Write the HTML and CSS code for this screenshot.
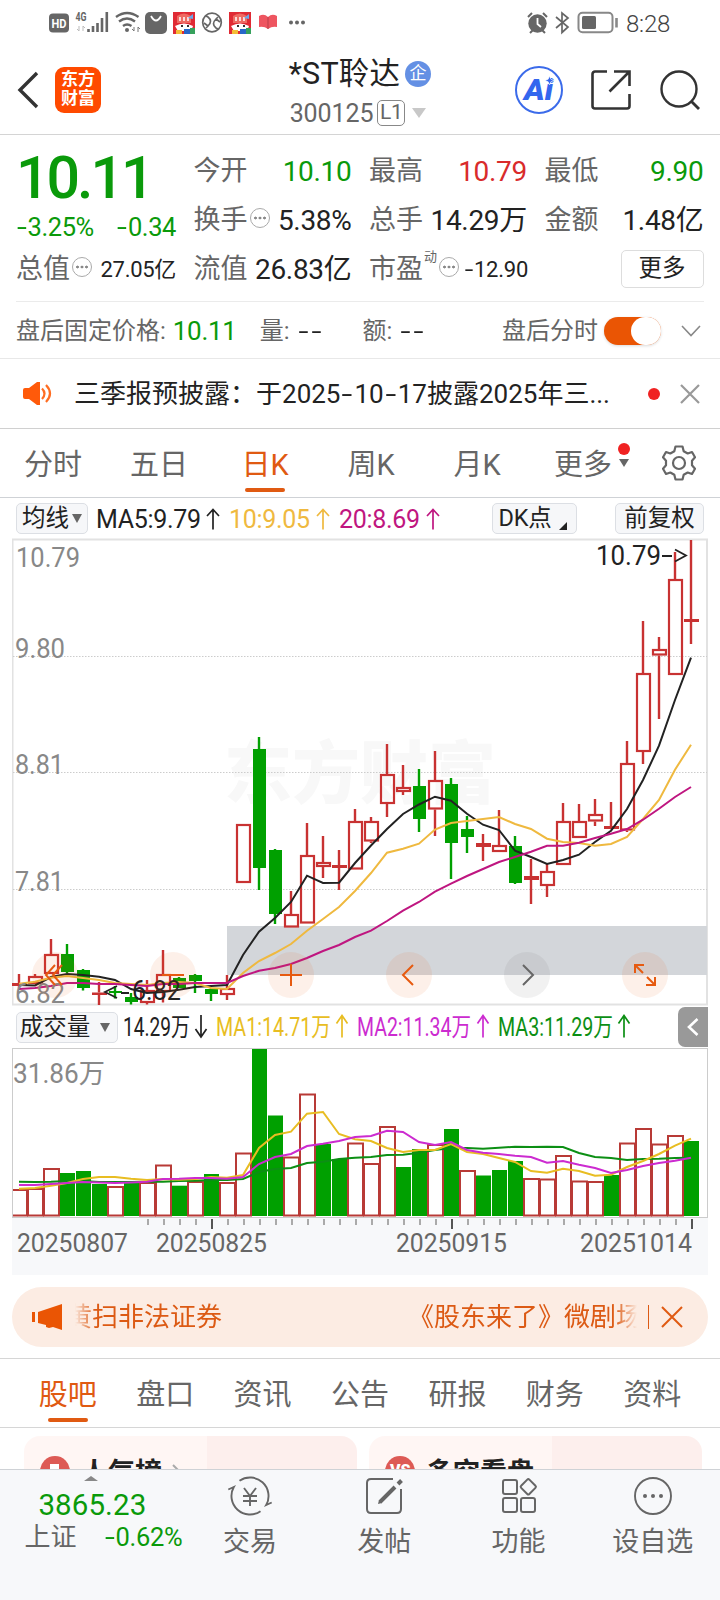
FILE: index.html
```
<!DOCTYPE html>
<html lang="zh-CN">
<head>
    <meta charset="UTF-8">
    <meta name="viewport" content="width=device-width,initial-scale=1.0">
    <title>*ST聆达 300125</title>
    <link rel="stylesheet" href="styles.css">
</head>
<body>
    <div class="status-bar">
        <svg class="status-left" width="320" height="46" viewBox="0 0 320 46">
            <rect x="49" y="13.500" width="20" height="19" rx="4" fill="#666"/>
            <text x="51.500" y="28" class="hd" textLength="15" lengthAdjust="spacingAndGlyphs">HD</text>
            <text x="75.500" y="21" class="net" textLength="11" lengthAdjust="spacingAndGlyphs">4G</text>
            <path d="M79 26v5l-2-2M83 31v-5l2 2" stroke="#bbb" fill="none"/>
            <path d="M88.500 32v-3M93 32v-6M97.500 32v-9M102 32v-14M106.800 32v-20" stroke="#666" stroke-width="2.600"/>
            <g stroke="#666" fill="none" stroke-width="2.400">
                <path d="M116 17q11-8 22.500 0M119 21.500q8-6 16 0M123 26q4-3 8.500 0"/>
            </g>
            <circle cx="127" cy="30" r="2" fill="#666"/>
            <path d="M134 27v4l-2-2M138 32v-5l2 2" stroke="#777" fill="none"/>
            <rect x="145" y="12" width="22" height="22" rx="5" fill="#666"/>
            <path d="M151 16q5 9 10 0" stroke="#fff" stroke-width="1.800" fill="none"/>
            <g id="game">
                <rect x="173" y="12" width="22" height="22" fill="#e02a34"/>
                <path d="M177 16q7-5 14 0v7h-14z" fill="#ee6a62"/>
                <path d="M180 17v4M184 17v4M188 17v4" stroke="#fff" stroke-width="1.500"/>
                <path d="M175 26q9-5 18 0l-2 5h-13z" fill="#fff"/>
                <path d="M181 26h2M187 26h2" stroke="#333" stroke-width="2"/>
                <rect x="176" y="30" width="6" height="4" fill="#f4bd35"/>
                <rect x="184" y="29" width="6" height="5" fill="#2767c9"/>
                <rect x="190" y="28" width="5" height="6" fill="#36a15c"/>
                <path d="M188 18l5-4v5z" fill="#69a7e8"/>
            </g>
            <use href="#game" x="56"/>
            <g stroke="#666" stroke-width="1.700" fill="none">
                <circle cx="212" cy="22.500" r="9.300"/>
                <path d="M206 16l2 1q5 4 0 9l-2 2M204 23l4 3M218 29l-2-1q-5-4 0-9l2-2M220 22l-4-3"/>
            </g>
            <path d="M259 16q5-3 9 1 4-4 9-1v11q-5-1-9 2-4-3-9-2z" fill="#ee5560"/>
            <path d="M268 17v12" stroke="#b93f49"/>
            <g fill="#666"><circle cx="291" cy="22.500" r="2"/><circle cx="297" cy="22.500" r="2"/><circle cx="303" cy="22.500" r="2"/></g>
        </svg>
        <div class="status-right">
            <svg width="96" height="46" viewBox="526 0 96 46">
                <circle cx="537.500" cy="23.500" r="9.200" fill="#666"/>
                <path d="M528 17l4-4M547 17l-4-4M530 33l3-3M545 33l-3-3" stroke="#666" stroke-width="2"/>
                <path d="M537.500 18v6l3.500 3" stroke="#fff" stroke-width="1.800" fill="none"/>
                <path d="M556 17l12 10-6 5.500V13l6 5-12 10" stroke="#666" stroke-width="1.700" fill="none"/>
                <rect x="578.500" y="12.700" width="34" height="19.500" rx="4" stroke="#888" stroke-width="2" fill="none"/>
                <rect x="582" y="16" width="14" height="13" rx="1.500" fill="#666"/>
                <path d="M616.500 18v9.500" stroke="#888" stroke-width="2.600"/>
            </svg>
            <span class="clock">8:28</span>
        </div>
    </div>

    <header>
        <div class="head-left">
            <svg width="24" height="40" viewBox="0 0 24 40"><path d="M21 3L4 20l17 17" fill="none" stroke="#333" stroke-width="3.400"/></svg>
            <div class="brand">东方<br>财富</div>
        </div>
        <div class="head-title">
            <h1>*ST聆达<i>企</i></h1>
            <p>300125<b>L1</b><span class="tri-light"></span></p>
        </div>
        <div class="head-right">
            <svg width="48" height="48" viewBox="0 0 48 48">
                <circle cx="24" cy="24" r="23" fill="none" stroke="#3b6bea" stroke-width="2"/>
                <text x="9" y="33.500" class="ai" textLength="29" lengthAdjust="spacingAndGlyphs">Ai</text>
                <path d="M34.500 10l1.300 3.200 3.200 1.300-3.200 1.300-1.300 3.200-1.300-3.200-3.200-1.300 3.200-1.300z" fill="#3366ee" stroke="#fff" stroke-width=".6"/>
            </svg>
            <svg class="share" width="40" height="40" viewBox="0 0 40 40">
                <path d="M16 1.500H4A2.500 2.500 0 0 0 1.500 4v32A2.500 2.500 0 0 0 4 38.500h32a2.500 2.500 0 0 0 2.500-2.500V24M23 1.500h15.500V16M37.500 2.500l-19 19" fill="none" stroke="#333" stroke-width="2.600"/>
            </svg>
            <svg width="42" height="42" viewBox="0 0 42 42"><circle cx="20" cy="20" r="17.500" fill="none" stroke="#333" stroke-width="2.400"/><path d="M32 32l8 8" stroke="#333" stroke-width="2.800"/></svg>
        </div>
    </header>

    <section class="quote">
        <div class="q-main">
            <strong>10.11</strong>
            <p><span><u>-</u>3.25%</span><span><u>-</u>0.34</span></p>
        </div>
        <div class="q-cell"><label>今开</label><span class="green">10.10</span></div>
        <div class="q-cell"><label>最高</label><span class="red">10.79</span></div>
        <div class="q-cell"><label>最低</label><span class="green">9.90</span></div>
        <div class="q-cell"><label>换手<em class="info"></em></label><span>5.38%</span></div>
        <div class="q-cell"><label>总手</label><span>14.29万</span></div>
        <div class="q-cell"><label>金额</label><span>1.48亿</span></div>
        <div class="q-cell"><label>总值<em class="info"></em></label><span class="small">27.05亿</span></div>
        <div class="q-cell"><label>流值</label><span>26.83亿</span></div>
        <div class="q-cell pe"><label>市盈<sup>动</sup><em class="info"></em></label><span class="small"><u>-</u>12.90</span></div>
        <div class="q-cell end"><button class="more">更多</button></div>
    </section>

    <section class="after">
        <span>盘后固定价格:</span><span class="after-price">10.11</span>
        <span>量: <b><u>-</u><u>-</u></b></span>
        <span class="amount">额: <b><u>-</u><u>-</u></b></span>
        <span class="after-label">盘后分时</span>
        <span class="switch"></span>
        <svg width="20" height="12" viewBox="0 0 20 12"><path d="M1 1l9 9.500L19 1" fill="none" stroke="#888" stroke-width="1.600"/></svg>
    </section>

    <section class="notice">
        <svg width="30" height="26" viewBox="0 0 30 26">
            <path d="M1 9q0-2 2-2h4l8-6h3v23h-3l-8-6H3q-2 0-2-2z" fill="#ff5a0a"/>
            <path d="M20 7.500q5 5 0 10.500M24 4q8 8.500 0 17" fill="none" stroke="#ff6d22" stroke-width="2.200"/>
        </svg>
        <p>三季报预披露：<span>于2025<u>-</u>10<u>-</u>17披露2025年三...</span></p>
        <i></i>
        <svg width="20" height="20" viewBox="0 0 20 20"><path d="M1 1l18 18M19 1L1 19" stroke="#999" stroke-width="2.200"/></svg>
    </section>

    <nav class="k-tabs">
        <a>分时</a><a>五日</a><a class="on">日K</a><a>周K</a><a>月K</a>
        <a class="k-more">更多<span class="arrow-box"><i></i></span></a>
        <svg width="34" height="36" viewBox="0 0 34 36">
            <path d="M13.500 1.500h7l1.200 4.700 4 2.300 4.300-1.500 3 5.200-3 3.500v4.600l3 3.500-3 5.200-4.300-1.500-4 2.300-1.200 4.700h-7l-1.200-4.700-4-2.300L4 29l-3-5.200 3-3.500v-4.600l-3-3.500L4 7l4.300 1.500 4-2.300z" fill="none" stroke="#666" stroke-width="2.200" stroke-linejoin="round"/>
            <circle cx="17" cy="18" r="6" fill="none" stroke="#666" stroke-width="2.200"/>
        </svg>
    </nav>

    <div class="ma-row">
        <button class="chip ma-chip">均线<i class="tri"></i></button>
        <span class="ma ma5">MA5:9.79</span><svg class="up c-black"><use href="#arrow-up"/></svg>
        <span class="ma c-yellow">10:9.05</span><svg class="up c-yellow"><use href="#arrow-up"/></svg>
        <span class="ma c-pink">20:8.69</span><svg class="up c-pink"><use href="#arrow-up"/></svg>
        <button class="chip dk">DK点<i class="corner"></i></button>
        <button class="chip fq">前复权</button>
    </div>

    <svg class="defs" width="0" height="0">
        <symbol id="arrow-up" viewBox="0 0 14 22"><path d="M7 21.500V1.500M1 8l6-6.500L13 8" fill="none" stroke="currentColor" stroke-width="1.700"/></symbol>
    </svg>

    <svg id="kline" class="chart" width="696" height="468" viewBox="12 538 696 468"></svg>

    <div class="vol-row">
        <button class="chip vol-chip">成交量<i class="tri"></i></button>
        <svg width="520" height="42" viewBox="120 1006 520 42" class="vol-legend">
            <g fill="#222" color="#222"><text x="123" y="1036" textLength="67">14.29万</text><path d="M201 1015v22M195.500 1029l5.500 8 5.500-8"/></g>
            <g fill="#e8bd22" color="#e8bd22"><text x="216" y="1036" textLength="115">MA1:14.71万</text><path d="M342 1037.500v-22M336.500 1023.500l5.500-8 5.500 8"/></g>
            <g fill="#cc2bd0" color="#cc2bd0"><text x="357" y="1036" textLength="114">MA2:11.34万</text><path d="M483 1037.500v-22M477.500 1023.500l5.500-8 5.500 8"/></g>
            <g fill="#0c8f14" color="#0c8f14"><text x="498" y="1036" textLength="115">MA3:11.29万</text><path d="M624 1037.500v-22M618.500 1023.500l5.500-8 5.500 8"/></g>
        </svg>
        <div class="drawer"><svg width="12" height="18" viewBox="0 0 12 18"><path d="M10.500 1L2 9l8.500 8" fill="none" stroke="#fff" stroke-width="2.600"/></svg></div>
    </div>

    <svg id="volume" class="chart" width="696" height="170" viewBox="12 1048 696 170"></svg>
    <svg id="axis" class="chart axis" width="696" height="57" viewBox="12 1218 696 57"></svg>

    <div class="banner">
        <svg width="32" height="28" viewBox="0 0 32 28"><path d="M1 9h3v10H1zM7 9l24-8v26l-9-3-4 1-3-1v-2l-8-2z" fill="#ea5504"/></svg>
        <div class="marquee"><span>黄扫非法证券</span><span>《股东来了》微剧场</span></div>
        <i></i>
        <svg width="22" height="22" viewBox="0 0 22 22"><path d="M1 1l20 20M21 1L1 21" stroke="#e05a12" stroke-width="2"/></svg>
    </div>

    <nav class="sub-tabs">
        <a class="on">股吧</a><a>盘口</a><a>资讯</a><a>公告</a><a>研报</a><a>财务</a><a>资料</a>
    </nav>

    <section class="cards">
        <div class="card">
            <svg width="30" height="30" viewBox="0 0 30 30"><circle cx="15" cy="15" r="15" fill="#dd5a55"/><path d="M10 8h9v14h-9z" fill="#fff"/></svg>
            <h2>人气榜</h2>
            <svg class="go" width="10" height="18" viewBox="0 0 10 18"><path d="M1 1l8 8-8 8" fill="none" stroke="#aaa" stroke-width="2"/></svg>
        </div>
        <div class="card">
            <svg width="30" height="30" viewBox="0 0 30 30"><circle cx="15" cy="15" r="15" fill="#dd5a55"/><text x="5" y="20" class="vs">VS</text></svg>
            <h2>多空看盘</h2>
        </div>
    </section>

    <footer>
        <div class="index">
            <i></i>
            <strong>3865.23</strong>
            <p><span>上证</span><b><u>-</u>0.62%</b></p>
        </div>
        <a>
            <svg width="46" height="40" viewBox="0 0 46 40" fill="none" stroke="#666" stroke-width="1.900">
                <path d="M12.500 4.800A18.500 18.500 0 0 1 39.200 29l5.500-2.500M33.500 35.200A18.500 18.500 0 0 1 6.800 11L1.300 13.500"/>
                <path d="M17 12l6 8 6-8M23 20v10M16 20h14M16 25h14"/>
            </svg>
            交易
        </a>
        <a>
            <svg width="40" height="40" viewBox="0 0 40 40" fill="none" stroke="#666" stroke-width="2">
                <path d="M29 3H7Q3 3 3 7v26q0 4 4 4h26q4 0 4-4V13"/>
                <path d="M16 26l15-15M34 8l3.500-3.500" stroke-width="4"/>
                <path d="M14 28l4-1-3-3z" fill="#666" stroke="none"/>
            </svg>
            发帖
        </a>
        <a>
            <svg width="40" height="40" viewBox="0 0 40 40" fill="none" stroke="#666" stroke-width="2">
                <rect x="4" y="4" width="14" height="14" rx="2"/>
                <rect x="4" y="22" width="14" height="14" rx="2"/>
                <rect x="22" y="22" width="14" height="14" rx="2"/>
                <rect x="23.500" y="5" width="11.600" height="11.600" rx="1.500" transform="rotate(45 29.300 10.800)"/>
            </svg>
            功能
        </a>
        <a>
            <svg width="40" height="40" viewBox="0 0 40 40"><circle cx="20" cy="20" r="18" fill="none" stroke="#666" stroke-width="1.900"/><g fill="#666"><circle cx="12" cy="20" r="2"/><circle cx="20" cy="20" r="2"/><circle cx="28" cy="20" r="2"/></g></svg>
            设自选
        </a>
    </footer>
    <script src="chart.js"></script>
</body>
</html>
```

FILE: styles.css
```
*{
    margin: 0;
    padding: 0;
    box-sizing: border-box;
}
body{
    width: 720px;
    height: 1600px;
    overflow: hidden;
    background: #fff;
    color: #222;
    font-family: Roboto, "Noto Sans CJK SC", sans-serif;
    font-size: 26px;
    line-height: 1;
}
svg{
    display: block;
    flex: none;
}
i, em{
    font-style: normal;
}
/* wide minus sign */
u{
    display: inline-block;
    width: .45em;
    text-align: center;
    text-decoration: none;
    transform: scaleX(1.4);
}
button{
    font-family: inherit;
    color: #222;
}
.green{
    color: #0a9a0a;
}
.red{
    color: #d92b2b;
}
.c-black{
    color: #222;
}
.c-yellow{
    color: #efb93f;
}
.c-pink{
    color: #bf1680;
}
.defs{
    position: absolute;
}

/* status bar */
.status-bar{
    height: 46px;
    display: flex;
    justify-content: space-between;
}
.status-right{
    display: flex;
    align-items: center;
    width: 194px;
}
.clock{
    font-size: 24px;
    font-weight: 300;
    color: #444;
    margin: 1px 0 0 4px;
    letter-spacing: -.2px;
}
.hd{
    font-size: 13px;
    font-weight: bold;
    fill: #fff;
}
.net{
    font-size: 12px;
    font-weight: bold;
    fill: #666;
}

/* header */
header{
    height: 89px;
    display: flex;
    justify-content: space-between;
    border-bottom: 1px solid #d4d4d4;
}
.head-left, .head-right{
    width: 250px;
    display: flex;
    align-items: center;
}
.head-left{
    padding-left: 16px;
}
.brand{
    width: 46px;
    height: 46px;
    margin-left: 15px;
    padding-top: 3px;
    background: #ff4a00;
    border-radius: 9px;
    color: #fff;
    font-size: 17px;
    font-weight: bold;
    line-height: 19px;
    text-align: center;
}
.head-title{
    display: flex;
    flex-direction: column;
    align-items: center;
    padding-top: 10px;
}
.head-title h1{
    display: flex;
    align-items: center;
    height: 36px;
    font-size: 30.500px;
    font-weight: normal;
    white-space: nowrap;
    letter-spacing: .2px;
}
.head-title h1 i{
    width: 26px;
    height: 26px;
    margin-left: 5px;
    border-radius: 50%;
    background: #6490e4;
    color: #fff;
    font-size: 17px;
    line-height: 25px;
    text-align: center;
}
.head-title p{
    display: flex;
    align-items: center;
    height: 42px;
    margin-left: -4px;
    font-size: 25px;
    color: #666;
    letter-spacing: -.1px;
}
.head-title b{
    width: 28px;
    height: 26px;
    margin-left: 4px;
    border: 1.500px solid #888;
    border-radius: 5px;
    font-size: 21px;
    font-weight: normal;
    line-height: 23px;
    text-align: center;
}
.tri-light{
    margin-left: 7px;
    border: 7.500px solid transparent;
    border-top: 10px solid #c8c8c8;
    border-bottom: 0;
}
.head-right{
    padding-left: 45px;
}
.ai{
    font-size: 29px;
    font-weight: 900;
    font-style: italic;
    fill: #3366ee;
}
.share{
    margin: 0 28px 0 28px;
}

/* quote */
.quote{
    height: 167px;
    margin: 0 16px;
    padding-top: 12px;
    display: grid;
    grid-template-columns: 160px 158px 158px 159px;
    grid-template-rows: 49px 49px 49px;
    column-gap: 17.500px;
    border-bottom: 1px solid #ebebeb;
}
.q-main{
    grid-row: span 2;
    color: #0a9a0a;
}
.q-main strong{
    display: block;
    height: 61px;
    font-size: 59px;
    font-weight: 500;
    line-height: 61px;
    letter-spacing: -3px;
}
.q-main p{
    display: flex;
    justify-content: space-between;
    line-height: 39px;
    font-size: 25.500px;
    letter-spacing: -.400px;
}
.q-cell{
    display: flex;
    justify-content: space-between;
    align-items: center;
    font-size: 28px;
    white-space: nowrap;
    letter-spacing: -.3px;
}
.q-cell label{
    display: flex;
    align-items: center;
    font-size: 27px;
    color: #666;
    letter-spacing: 0;
}
.q-cell.end{
    justify-content: flex-end;
}
.q-cell.end .more{
    margin-top: -2px;
}
.q-cell .small{
    font-size: 22px;
}
.q-cell.pe{
    justify-content: flex-start;
}
.q-cell.pe .small{
    margin-left: 5px;
    letter-spacing: -.2px;
}
.q-cell sup{
    margin: -26px 0 0 1px;
    font-size: 13px;
}
.info{
    width: 20px;
    height: 20px;
    margin: -6px 0 0 2px;
    border: 1.500px solid #aaa;
    border-radius: 50%;
    background: radial-gradient(circle, #888 1.200px, transparent 1.700px) center / 4.500px 30px repeat-x content-box;
    padding: 0 2px;
}
.more{
    width: 83px;
    height: 38px;
    border: 1.500px solid #ddd;
    border-radius: 5px;
    background: #fff;
    font-size: 23.500px;
    line-height: 30px;
    padding-bottom: 2px;
}

/* after hours */
.after{
    height: 57px;
    padding: 2px 19px 0 16px;
    display: flex;
    align-items: center;
    border-bottom: 1px solid #e8e8e8;
    font-size: 24px;
    color: #666;
}
.after b{
    color: #222;
    font-weight: normal;
    margin-left: 1px;
}
.after b u{
    width: 13px;
    transform: scaleX(1.5);
}
.after-price{
    width: 94px;
    padding-left: 7px;
    font-size: 26px;
    color: #0a9a0a;
    letter-spacing: -.3px;
}
.amount{
    margin-left: 40px;
}
.after-label{
    margin-left: auto;
}
.switch{
    width: 57px;
    height: 28px;
    margin: 0 20px 0 6px;
    border-radius: 14px;
    background: #ea5504;
    box-shadow: 0 1px 3px rgba(0,0,0,.15);
}
.switch::after{
    content: "";
    display: block;
    width: 30px;
    height: 28px;
    margin-left: 27px;
    border-radius: 15px;
    background: #fff;
}

/* notice */
.notice{
    height: 70px;
    padding: 0 20px 0 22px;
    display: flex;
    align-items: center;
    border-bottom: 1px solid #d0d0d0;
}
.notice p{
    margin-left: 22px;
    white-space: nowrap;
}
.notice u{
    width: 14px;
    transform: scaleX(1.5);
}
.notice i{
    width: 12px;
    height: 12px;
    margin: 0 20px 0 auto;
    border-radius: 50%;
    background: #f02222;
}

/* period tabs */
.k-tabs{
    height: 69px;
    display: flex;
    align-items: center;
    border-bottom: 1px solid #cfd2d6;
}
.k-tabs a{
    width: 106px;
    height: 68px;
    padding-top: 4px;
    display: flex;
    justify-content: center;
    align-items: center;
    font-size: 29px;
    color: #666;
    position: relative;
}
.k-tabs svg{
    margin-left: 26px;
}
.k-tabs a.on, .sub-tabs a.on{
    color: #e05a12;
}
.k-tabs .on::after, .sub-tabs .on::after{
    content: "";
    position: absolute;
    bottom: 5px;
    width: 40px;
    height: 4px;
    border-radius: 2px;
    background: #e05a12;
}
.k-more .arrow-box{
    position: absolute;
    left: 89px;
    top: 30px;
    border: 5px solid transparent;
    border-top: 8px solid #666;
    border-bottom: 0;
}
.arrow-box i{
    position: absolute;
    left: -6px;
    top: -24px;
    width: 12px;
    height: 12px;
    border-radius: 50%;
    background: #f02222;
}

/* moving average row */
.ma-row{
    height: 40px;
    padding: 1px 16px 0;
    display: flex;
    align-items: center;
}
.chip{
    height: 31px;
    padding-bottom: 1px;
    display: flex;
    align-items: center;
    justify-content: center;
    border: 1px solid #dcdfe4;
    border-radius: 5px;
    background: #f6f7f9;
    font-size: 23.500px;
    line-height: 28px;
    white-space: nowrap;
}
.ma-chip{
    width: 72px;
    margin-right: 8px;
}
.tri{
    margin: 1px 0 0 3px;
    border: 5px solid transparent;
    border-top: 9px solid #666;
    border-bottom: 0;
}
.ma{
    width: 83px;
    padding-top: 1px;
    font-size: 25px;
    letter-spacing: -.3px;
}
.ma5{
    width: 106px;
}
.up{
    width: 14px;
    height: 22px;
    margin: 0 9px 0 4px;
}
.dk{
    width: 85px;
    margin-left: auto;
    padding-right: 10px;
    letter-spacing: -.2px;
}
.corner{
    margin: 16px -6px 0 7px;
    border-left: 8px solid transparent;
    border-bottom: 8px solid #222;
}
.fq{
    width: 89px;
    margin-left: 38px;
}

/* charts */
.chart{
    margin-left: 12px;
}
.chart .label{
    font-size: 27px;
    fill: #888;
}
.chart .mark{
    font-size: 27px;
    fill: #222;
}
.watermark{
    font-size: 68px;
    font-weight: 900;
    fill: #f8f8f8;
}
.axis{
    background: #f7f8fa;
}
.axis text{
    font-size: 25px;
    fill: #666;
}
.vol-row{
    height: 42px;
    padding: 0 12px 0 16px;
    display: flex;
    align-items: center;
}
.vol-chip{
    width: 102px;
    padding-right: 4px;
}
.vol-chip .tri{
    margin-left: 10px;
}
.vol-legend{
    margin-left: 2px;
}
.vol-legend text{
    font-size: 25px;
}
.vol-legend path{
    fill: none;
    stroke: currentColor;
    stroke-width: 1.700;
}
.drawer{
    width: 30px;
    height: 40px;
    margin-left: auto;
    display: flex;
    align-items: center;
    justify-content: center;
    border-radius: 7px 0 0 7px;
    background: #999;
}

/* banner */
.banner{
    height: 60px;
    margin: 12px 12px 11px;
    padding: 0 25px 0 19px;
    display: flex;
    align-items: center;
    border-radius: 30px;
    background: #fcece3;
    color: #dc5a14;
}
.marquee{
    width: 564px;
    height: 40px;
    margin-left: 12px;
    display: flex;
    justify-content: space-between;
    align-items: center;
    overflow: hidden;
    white-space: nowrap;
    -webkit-mask-image: linear-gradient(90deg, transparent, #000 20px, #000 540px, transparent);
    mask-image: linear-gradient(90deg, transparent, #000 20px, #000 540px, transparent);
}
.marquee span{
    margin: 0 -5px 0 -9px;
}
.banner i{
    width: 1px;
    height: 24px;
    margin: 0 12px 0 11px;
    background: #dc5a14;
}

/* sub tabs */
.sub-tabs{
    height: 70px;
    padding: 0 19px;
    display: flex;
    border-top: 1px solid #d6d6d6;
    border-bottom: 1px solid #d6d6d6;
}
.sub-tabs a{
    flex: 1;
    position: relative;
    display: flex;
    justify-content: center;
    align-items: center;
    padding-top: 4px;
    font-size: 29px;
    color: #666;
}
.sub-tabs .on::after{
    bottom: 5px;
}

.cards{
    height: 41px;
    padding: 8px 18px 0 24px;
    display: flex;
    gap: 12px;
    overflow: hidden;
}
.card{
    width: 333px;
    height: 120px;
    padding: 20px 16px;
    display: flex;
    border-radius: 16px;
    background: linear-gradient(90deg, #fff6f4 55%, #fdefed 55%);
}
.card h2{
    margin: 1px 0 0 11px;
    font-size: 27px;
    font-weight: bold;
    line-height: 32px;
    color: #222;
}
.card .go{
    margin: 8px 0 0 10px;
}
.vs{
    font-size: 16px;
    font-weight: 900;
    fill: #fff;
}

/* bottom bar */
footer{
    height: 131px;
    display: flex;
    border-top: 1px solid #cfd2d6;
    background: #f7f8fa;
    color: #666;
}
.index{
    width: 183px;
    display: flex;
    flex-direction: column;
    align-items: center;
}
.index i{
    margin-top: 6px;
    border: 7px solid transparent;
    border-bottom: 5px solid #888;
    border-top: 0;
}
.index strong{
    margin: 7px 0 0 2px;
    color: #0a9a0a;
    font-size: 29.500px;
    font-weight: normal;
    line-height: 34px;
    letter-spacing: .1px;
}
.index p{
    width: 158px;
    margin: 1px 0 0 24px;
    display: flex;
    justify-content: space-between;
    align-items: center;
    line-height: 28px;
}
.index b{
    color: #0a9a0a;
    font-weight: normal;
    font-size: 25.500px;
    letter-spacing: -.3px;
}
footer a{
    width: 134.500px;
    padding-top: 6px;
    display: flex;
    flex-direction: column;
    align-items: center;
    font-size: 27px;
    line-height: 52px;
}
```

FILE: chart.js
```
const RED = '#c83232';
const GREEN = '#00a000';
const X0 = 19;
const STEP = 16;

// [up, high, body top, body bottom, low]
const candles = [
    [1, 974, 983, 986, 988], [1, 974, 976, 984, 984], [1, 939, 954, 974, 974], [0, 944, 954, 972, 973],
    [0, 969, 970, 988, 990.5], [1, 982, 992.5, 995, 1005], [0, 986, 991, 993, 998.5], [0, 993, 997, 1002, 1004.5],
    [1, 980, 990, 1003, 1004.5], [1, 950, 974, 992, 1002.5], [0, 977, 978, 988, 988], [0, 974, 975, 981, 993],
    [0, 988, 989, 994, 1001], [1, 975, 988, 995, 1000], [1, 824, 824, 883, 883], [0, 737, 749, 868, 890],
    [0, 849, 850, 914, 924], [1, 891, 914, 927.5, 927], [1, 823, 855, 923.5, 923], [1, 836, 862, 867, 878],
    [1, 850, 865, 868, 890], [1, 809, 821, 869.5, 869], [1, 817, 821, 841.5, 843], [1, 744, 774, 804, 817],
    [1, 765, 787, 792, 795], [0, 769, 786, 819, 832], [1, 751, 780, 809.5, 836], [0, 778, 784, 843, 879],
    [0, 816, 829, 837, 853], [1, 834, 843, 847, 861], [1, 810, 845, 852, 852], [0, 836, 846, 883, 884],
    [1, 859, 876, 880, 904], [1, 863, 871, 886, 897], [1, 803, 821, 865, 865], [1, 804, 821, 838, 838],
    [1, 799, 814, 821.5, 826], [1, 802, 826, 829, 829], [1, 741, 763, 830.5, 832], [1, 621, 673, 752, 764],
    [1, 637, 649, 655.5, 719], [1, 552, 579, 675, 675], [1, 540, 619, 622, 644]
];
const ma5 = [985, 985.5, 977, 974, 975, 976.7, 980, 989, 993, 992, 989.7, 987, 986, 985, 955, 931.7, 918, 902, 875.7, 883, 882.7, 863, 845.5, 829, 814, 804.5, 796.7, 800.7, 813.7, 824.7, 830, 850.7, 857, 864, 860, 854.7, 842, 830.7, 809, 780, 745.7, 700, 657.7];
const ma10 = [983.7, 981.7, 977.7, 976, 978, 980, 983, 984, 985, 983, 982, 983, 988, 989, 973, 961, 953, 944, 930.7, 919, 907, 891, 873, 852.7, 848.7, 843.7, 829.5, 823, 821, 819, 817, 824, 829, 838.7, 842, 843, 845.7, 844, 837, 819, 800, 769.7, 744.7];
const ma20 = [989, 988, 986, 983, 983, 984, 984, 985, 986, 984, 984, 983, 983, 983, 976, 970.7, 968, 964, 958, 951, 945, 937, 930.7, 921, 910.7, 902, 891.7, 883.7, 876, 869, 862, 857, 851.7, 845.7, 845.7, 842.7, 838, 833.7, 829, 819.7, 808.7, 797, 787];

// [red, top]
const bars = [
    [1, 1189], [1, 1189], [1, 1169], [0, 1173], [0, 1171], [0, 1184], [1, 1187], [0, 1183], [1, 1183], [1, 1165.5],
    [0, 1185.7], [1, 1182], [0, 1174], [1, 1183], [1, 1153.5], [0, 1049], [0, 1115.5], [1, 1157.5], [1, 1094.5], [0, 1144],
    [0, 1159], [1, 1143.5], [1, 1164], [1, 1127], [0, 1167], [0, 1149], [1, 1145], [0, 1129], [1, 1171], [0, 1175.5],
    [0, 1170], [0, 1161], [1, 1179], [1, 1179.5], [1, 1156], [1, 1181.5], [1, 1182], [0, 1175], [1, 1143.5], [1, 1129],
    [1, 1144.5], [1, 1136], [0, 1141]
];
const vma1 = [1188.7, 1188, 1185.7, 1183, 1179, 1177, 1177, 1178.7, 1180, 1179, 1179.7, 1179, 1177, 1177.7, 1175, 1148, 1135, 1131.7, 1113.7, 1112, 1134, 1139.3, 1141, 1148, 1152, 1150, 1150, 1144, 1152, 1154, 1158, 1162, 1171, 1172.7, 1168.7, 1171, 1175.7, 1174.7, 1167, 1161, 1154, 1145.7, 1138.7];
const vma2 = [1185, 1185, 1184, 1183, 1182, 1182.5, 1183, 1182.5, 1181.7, 1179, 1178.7, 1178, 1178, 1178.7, 1177, 1164, 1157, 1154, 1146, 1143.7, 1141, 1137, 1136, 1130.7, 1132, 1142, 1145, 1142, 1150, 1152.7, 1154, 1155.7, 1157, 1162.7, 1161, 1164.7, 1168, 1173, 1170, 1166, 1163, 1160.7, 1157.7];
const vma3 = [1181.7, 1182, 1181.7, 1181, 1181, 1182, 1182, 1182, 1181.7, 1181.7, 1181, 1180.7, 1180, 1180, 1179, 1172, 1169, 1168, 1163, 1161.7, 1159, 1157.7, 1157, 1155, 1154.7, 1152.7, 1150, 1148, 1148, 1148.7, 1147.7, 1146.7, 1147, 1146.7, 1147, 1153, 1157, 1158, 1160, 1159, 1158.7, 1158, 1157.7];

const x = i => X0 + STEP * i;
const line = (arr, color) =>
    `<polyline points="${arr.map((v, i) => x(i) + ',' + v).join(' ')}" fill="none" stroke="${color}" stroke-width="2"/>`;
const text = (px, py, cls, str, len) =>
    `<text x="${px}" y="${py}" class="${cls}" textLength="${len}" lengthAdjust="spacingAndGlyphs">${str}</text>`;

// price chart
let k = '<rect x="12.5" y="539.5" width="694.5" height="465" fill="#fff" stroke="#e2e2e2" stroke-width="2"/>';
k += '<text x="224" y="798" class="watermark">东方财富</text>';
[656.5, 772.5, 889.5].forEach(y => {
    k += `<path d="M13 ${y}H707" stroke="#ccc" stroke-dasharray="1.5 1.5"/>`;
});
k += '<rect x="227" y="926" width="480" height="49" fill="#d3d6da"/>';
candles.forEach(([up, high, top, bottom, low], i) => {
    const c = up ? RED : GREEN;
    if (high < top) k += `<path d="M${x(i)} ${high}V${top}" stroke="${c}" stroke-width="2.4"/>`;
    if (low > bottom) k += `<path d="M${x(i)} ${bottom}V${low}" stroke="${c}" stroke-width="2.4"/>`;
    if (up && bottom - top > 4) {
        k += `<rect x="${x(i) - 6}" y="${top + 1}" width="13" height="${bottom - top - 2}" fill="none" stroke="${c}" stroke-width="2.2"/>`;
    } else {
        const w = up ? 15 : 13;
        k += `<rect x="${x(i) - (up ? 7 : 6)}" y="${top}" width="${w}" height="${bottom - top}" fill="${c}"/>`;
    }
});
k += line(ma5, '#222') + line(ma10, '#efb93f') + line(ma20, '#bf1680');
k += text(16, 567, 'label', '10.79', 64) + text(15, 658, 'label', '9.80', 50) + text(15, 774, 'label', '8.81', 49);
k += text(15, 891, 'label', '7.81', 49) + text(15, 1002.5, 'label', '6.82', 50);
k += text(596, 565, 'mark', '10.79', 65) + '<path d="M662 556h10M675 549.5l11 6-11 6" fill="none" stroke="#222" stroke-width="1.8"/>';
k += text(132, 1000, 'mark', '6.82', 49) + '<path d="M121 993h8M117 986l-12 6 12 6" fill="none" stroke="#222" stroke-width="1.8"/>';
// round control buttons
const controls = [
    [55, 'M0-10l-9 10 9 10M7-10l-9 10 9 10'],
    [173, 'M-11 0H11'],
    [291, 'M-11 0H11M0-11V11'],
    [409, 'M4-10l-10 10 10 10'],
    [527, 'M-4-10l10 10-10 10'],
    [645, 'M-10-2V-10H-1M-10-10L-2-2M10 2V10H1M10 10L2 2']
];
controls.forEach(([cx, d], i) => {
    const c = i === 4 ? '#666' : '#e65a10';
    k += `<g transform="translate(${cx} 975)"><circle r="23" fill="${c}" fill-opacity=".09"/><path d="${d}" fill="none" stroke="${c}" stroke-width="2"/></g>`;
});
document.getElementById('kline').innerHTML = k;

// volume chart
let v = '<rect x="12.5" y="1048.5" width="695" height="169" fill="#fff" stroke="#ccc"/>';
v += text(13, 1083, 'label', '31.86万', 92);
bars.forEach(([red, top], i) => {
    const left = Math.max(13, x(i) - 7);
    const w = x(i) + 8 - left;
    if (!red) v += `<rect x="${left}" y="${top}" width="${w}" height="${1216 - top}" fill="${GREEN}"/>`;
    else if (i === 0) v += `<path d="M13 ${top + 1}H27V1215.500H13" fill="none" stroke="#b83a36" stroke-width="2"/>`;
    else v += `<rect x="${left}" y="${top}" width="15" height="${1215.5 - top}" fill="none" stroke="#b83a36" stroke-width="2"/>`;
});
v += line(vma3, '#0c8f14') + line(vma1, '#e8bd22') + line(vma2, '#cc2bd0');
document.getElementById('volume').innerHTML = v;

// date axis
let a = '';
for (let i = 8; i < 43; i++) {
    const major = i === 12 || i === 27 || i === 42;
    a += `<path d="M${x(i) + 1} 1219v${major ? 10 : 6}" stroke="${major ? '#555' : '#aaa'}" stroke-width="2"/>`;
}
a += text(17, 1251.5, '', '20250807', 111) + text(156, 1251.5, '', '20250825', 111);
a += text(396, 1251.5, '', '20250915', 111) + text(580, 1251.5, '', '20251014', 112);
document.getElementById('axis').innerHTML = a;

document.querySelectorAll('.vol-legend text').forEach(t => t.setAttribute('lengthAdjust', 'spacingAndGlyphs'));
```
